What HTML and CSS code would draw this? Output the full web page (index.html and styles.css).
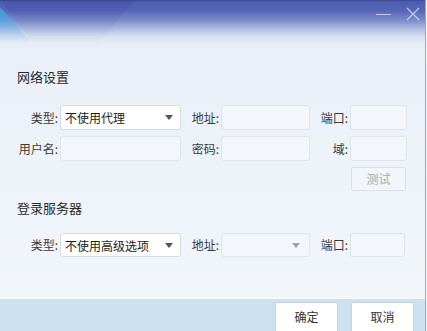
FILE: index.html
```html
<!DOCTYPE html>
<html lang="zh-CN">
<head>
  <meta charset="UTF-8">
  <title>网络设置</title>
<link rel="stylesheet" href="styles.css">
</head>
<body>
<div class="dialog">
  <div class="titlebar">
    <svg class="deco" width="140" height="50" viewBox="0 0 140 50">
      <defs>
        <linearGradient id="fadeDark" x1="0" y1="0" x2="0" y2="1">
          <stop offset="0" stop-color="#2a3680" stop-opacity="0.14"/>
          <stop offset="1" stop-color="#2a3680" stop-opacity="0"/>
        </linearGradient>
        <linearGradient id="fadeCyan" x1="0" y1="0" x2="0" y2="1">
          <stop offset="0" stop-color="#2f9ee0" stop-opacity="0.95"/>
          <stop offset="1" stop-color="#8cc8ee" stop-opacity="0"/>
        </linearGradient>
      </defs>
      <polygon points="0,0 135,0 98,44 34,44" fill="url(#fadeDark)"/>
      <polygon points="0,7 32,44 0,44" fill="url(#fadeCyan)"/>
    </svg>
    <div class="win-btns">
      <span class="win-min"></span>
      <svg class="win-close" width="14" height="14" viewBox="0 0 14 14">
        <path d="M1 1 L13 13 M13 1 L1 13" stroke="#c4cceb" stroke-width="1.2"/>
      </svg>
    </div>
  </div>

  <div class="section">
    <h2 class="section-title">网络设置</h2>
    <div class="form">
      <label class="lbl">类型:</label>
      <div class="select"><span>不使用代理</span><i class="arrow"></i></div>
      <label class="lbl">地址:</label>
      <div class="input"></div>
      <label class="lbl">端口:</label>
      <div class="input"></div>

      <label class="lbl">用户名:</label>
      <div class="input"></div>
      <label class="lbl">密码:</label>
      <div class="input"></div>
      <label class="lbl">域:</label>
      <div class="input"></div>

      <div class="test-btn">测试</div>
    </div>
  </div>

  <div class="section">
    <h2 class="section-title second">登录服务器</h2>
    <div class="form short">
      <label class="lbl">类型:</label>
      <div class="select"><span>不使用高级选项</span><i class="arrow"></i></div>
      <label class="lbl">地址:</label>
      <div class="select disabled"><span></span><i class="arrow"></i></div>
      <label class="lbl">端口:</label>
      <div class="input port"></div>
    </div>
  </div>

  <div class="footer">
    <button class="btn">确定</button>
    <button class="btn">取消</button>
  </div>
</div>
</body>
</html>
```

FILE: styles.css
```css
* {
  box-sizing: border-box;
}
body {
  margin: 0;
  background: #f6f9fc;
  font-family: "Noto Sans CJK SC", "Noto Sans", sans-serif;
  color: #333;
  overflow: hidden;
}
.dialog {
  position: relative;
  width: 426px;
  height: 331px;
  border-right: 1px solid #a4a9b0;
  display: flex;
  flex-direction: column;
  overflow: hidden;
  background: linear-gradient(to bottom,
    #3b4894 0,
    #4d5db0 2px,
    #5464b6 10px,
    #7a8ac9 20px,
    #aab6df 28px,
    #d6deef 36px,
    #e6ecf6 43px,
    #eaf0f8 50px,
    #f2f6fb 298px);
}
.titlebar {
  position: relative;
  height: 56px;
  flex: none;
}
.deco {
  position: absolute;
  left: 0;
  top: 0;
}
.win-btns {
  position: absolute;
  right: 5px;
  top: 7px;
  display: flex;
  align-items: center;
  gap: 15px;
}
.win-min {
  width: 15px;
  height: 1px;
  background: #c4cceb;
  margin-top: 1px;
}
.win-close {
  display: block;
}
.section-title {
  margin: 13px 0 0 17px;
  font-size: 13px;
  font-weight: normal;
  line-height: 16px;
  color: #2a2a2a;
}
.section-title.second {
  margin-top: 8px;
}
.form {
  margin: 20px 0 0 17px;
  display: grid;
  grid-template-columns: 43px 121px 40px 89px 40px 57px;
  grid-auto-rows: 25px;
  row-gap: 6px;
  font-size: 12px;
}
.form.short {
  margin-top: 17px;
  grid-auto-rows: 24px;
}
.lbl {
  text-align: right;
  padding-right: 2px;
  line-height: 25px;
  white-space: nowrap;
  color: #3a3a3a;
}
.short .lbl {
  line-height: 24px;
}
.select {
  display: flex;
  align-items: center;
  justify-content: space-between;
  background: #fff;
  border: 1px solid #d6dbe3;
  border-radius: 3px;
  padding: 0 7px 0 4px;
  color: #222;
}
.arrow {
  width: 0;
  height: 0;
  border-left: 4px solid transparent;
  border-right: 4px solid transparent;
  border-top: 5px solid #555;
}
.select.disabled {
  background: #f3f6fa;
  border-color: #e0e5eb;
  padding-right: 9px;
}
.select.disabled .arrow {
  border-top-color: #a0a4aa;
}
.input {
  background: #f3f6fa;
  border: 1px solid #dfe4ea;
  border-radius: 3px;
}
.input.port {
  margin-right: 2px;
}
.test-btn {
  grid-column: 6;
  grid-row: 3;
  width: 55px;
  height: 24px;
  margin-left: 1px;
  background: #f2f5f9;
  border: 1px solid #dce1e7;
  border-radius: 2px;
  color: #ababab;
  text-align: center;
  line-height: 22px;
}
.footer {
  margin-top: auto;
  height: 33px;
  flex: none;
  border-top: 1px solid #f8fbfd;
  background: #cde1f1;
  display: flex;
  justify-content: flex-end;
  gap: 13px;
  padding: 3px 11px 0 0;
}
.btn {
  width: 63px;
  height: 31px;
  flex: none;
  background: #fff;
  border: 1px solid #c9d2db;
  border-radius: 2px;
  font-family: inherit;
  font-size: 12px;
  color: #333;
  padding: 0 0 3px;
}
```
